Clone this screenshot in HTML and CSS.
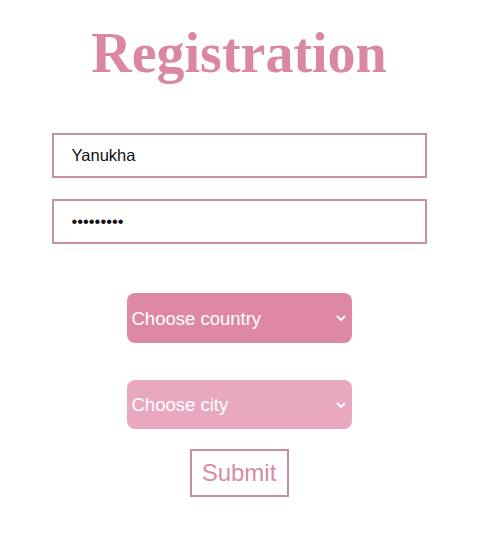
FILE: index.html
```html
<!DOCTYPE html>
<html>
<head>
<meta charset="utf-8">
<link rel="stylesheet" href="styles.css">
</head>
<body>
<form class="form">
  <h1 class="title">Registration</h1>
  <input class="field field-name" type="text" value="Yanukha">
  <input class="field field-pass" type="password" value="123456789">
  <div class="select-wrap select-country">
    <select class="select"><option>Choose country</option></select>
    <svg class="chevron" width="10" height="7" viewBox="0 0 10 7"><path d="M1.5 1.5 L5 5 L8.5 1.5" fill="none" stroke="#fff" stroke-width="1.9" stroke-linecap="round" stroke-linejoin="round"/></svg>
  </div>
  <div class="select-wrap select-city">
    <select class="select"><option>Choose city</option></select>
    <svg class="chevron" width="10" height="7" viewBox="0 0 10 7"><path d="M1.5 1.5 L5 5 L8.5 1.5" fill="none" stroke="#fff" stroke-width="1.9" stroke-linecap="round" stroke-linejoin="round"/></svg>
  </div>
  <button class="submit" type="button">Submit</button>
</form>
</body>
</html>
```

FILE: styles.css
```css
html, body {
  margin: 0;
  padding: 0;
  background: #fff;
}

.form {
  display: flex;
  flex-direction: column;
  align-items: center;
  width: 478px;
}

.title {
  margin: 22px 0 0 0;
  font-family: "Liberation Serif", "Times New Roman", serif;
  font-weight: bold;
  font-size: 56px;
  line-height: 62px;
  color: #d9889f;
}

.field {
  box-sizing: border-box;
  width: 375px;
  height: 45px;
  border: 2px solid #c890a8;
  border-radius: 0;
  padding: 0 0 0 18px;
  font-family: "Liberation Sans", Arial, sans-serif;
  font-size: 16.5px;
  color: #111;
  background: #fff;
  outline: none;
}

.field-name {
  margin-top: 49px;
}

.field-pass {
  margin-top: 21px;
}

.select-wrap {
  position: relative;
  width: 225px;
}

.select-country {
  margin-top: 49px;
  height: 50px;
}

.select-city {
  margin-top: 37px;
  height: 49px;
}

.select {
  appearance: none;
  -webkit-appearance: none;
  box-sizing: border-box;
  width: 100%;
  height: 100%;
  border: none;
  border-radius: 8px;
  padding: 0 0 0 5px;
  font-family: "Liberation Sans", Arial, sans-serif;
  font-size: 18.5px;
  color: #fff;
  outline: none;
}

.select-country .select {
  background: #df88a6;
}

.select-city .select {
  background: #e8a9c0;
}

.chevron {
  position: absolute;
  right: 6px;
  top: 50%;
  margin-top: -3px;
  pointer-events: none;
}

.submit {
  box-sizing: border-box;
  margin-top: 20px;
  width: 99px;
  height: 48px;
  border: 2px solid #c98ca7;
  border-radius: 0;
  background: #fff;
  padding: 0;
  font-family: "Liberation Sans", Arial, sans-serif;
  font-size: 24px;
  color: #d78ba6;
}
```
